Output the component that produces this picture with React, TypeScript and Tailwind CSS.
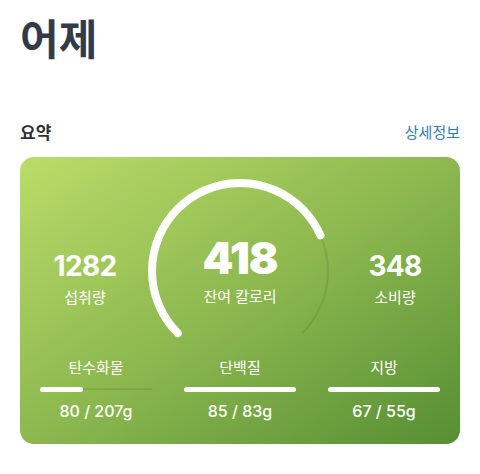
const font = { fontFamily: 'Inter, "Noto Sans CJK KR", sans-serif' };

type Macro = { label: string; value: number; goal: number };

const macros: Macro[] = [
  { label: '탄수화물', value: 80, goal: 207 },
  { label: '단백질', value: 85, goal: 83 },
  { label: '지방', value: 67, goal: 55 },
];

function Gauge({ pct }: { pct: number }) {
  // 270° 게이지, 아래쪽이 비어 있음
  const d = 'M 29.78 154.22 A 88 88 0 1 1 154.22 154.22';
  return (
    <svg width="184" height="184" viewBox="0 0 184 184" className="absolute left-1/2 top-0 -translate-x-1/2">
      <path d={d} fill="none" stroke="rgba(40,80,10,0.13)" strokeWidth="2" />
      <path
        d={d}
        fill="none"
        stroke="white"
        strokeWidth="8"
        strokeLinecap="round"
        pathLength={100}
        strokeDasharray={`${pct} 200`}
      />
    </svg>
  );
}

function Stat({ value, label }: { value: string; label: string }) {
  return (
    <div className="w-[130px] flex flex-col items-center pt-[71px] text-white">
      <span className="text-[28px] leading-[32px] font-bold tracking-tight">{value}</span>
      <span className="text-[15px] leading-[20px] mt-[6px]">{label}</span>
    </div>
  );
}

export default function App() {
  return (
    <div className="min-h-[474px] bg-white px-5" style={font}>
      <h1 className="pt-[15px] text-[42px] leading-[50px] font-bold text-[#333c46]">어제</h1>

      <div className="mt-[56px] flex items-center justify-between">
        <span className="text-[17px] leading-[24px] font-semibold text-[#2c3238]">요약</span>
        <span className="text-[15px] leading-[24px] text-[#2f7db6]">상세정보</span>
      </div>

      <div className="mt-[12px] rounded-[14px] bg-linear-to-br from-[#bbdc68] via-[#8cb84f] to-[#568f33] pt-[22px] pb-[23px]">
        <div className="flex h-[160px]">
          <Stat value="1282" label="섭취량" />
          <div className="relative flex-1 flex flex-col items-center text-white">
            <Gauge pct={74.5} />
            <span className="mt-[54px] text-[44px] leading-[50px] font-black tracking-tight">418</span>
            <span className="text-[15px] leading-[20px] mt-[4px]">잔여 칼로리</span>
          </div>
          <Stat value="348" label="소비량" />
        </div>

        <div className="mt-[19px] px-5 grid grid-cols-3 gap-8 text-white">
          {macros.map((m) => {
            const pct = Math.min(100, (m.value / m.goal) * 100);
            return (
              <div key={m.label} className="flex flex-col items-center">
                <span className="text-[15px] leading-[20px]">{m.label}</span>
                <div className="relative w-full h-[6px] mt-[8px] flex items-center">
                  <div className="w-full h-[2px] bg-[rgba(40,80,10,0.13)]" />
                  <div
                    className="absolute left-0 top-[0.5px] h-[5px] rounded-full bg-white"
                    style={{ width: `${pct}%` }}
                  />
                </div>
                <span className="mt-[9px] text-[16px] leading-[20px] font-medium">
                  {m.value} / {m.goal}g
                </span>
              </div>
            );
          })}
        </div>
      </div>
    </div>
  );
}
